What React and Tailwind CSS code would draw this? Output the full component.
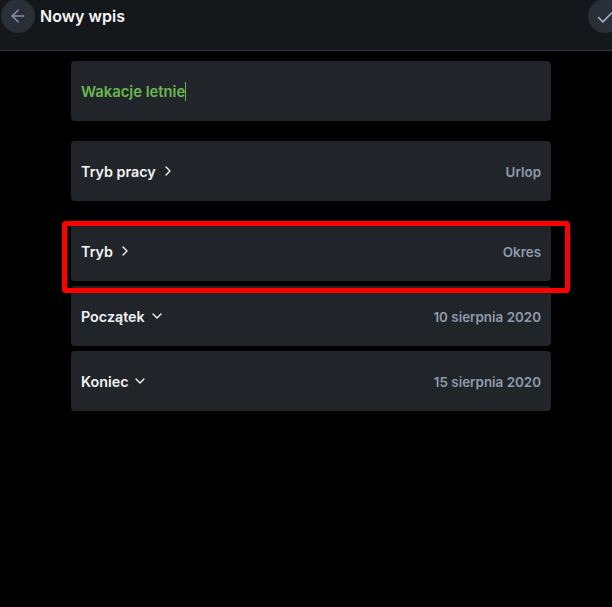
import { ArrowLeft, Check, ChevronRight, ChevronDown } from 'lucide-react';

function Row({ label, value, open, className = '' }) {
  const Icon = open ? ChevronDown : ChevronRight;
  return (
    <div className={`h-[60px] bg-[#212429] rounded-sm flex items-center justify-between px-2.5 ${className}`}>
      <div className="flex items-center gap-1">
        <span className="mt-0.5 text-[14.3px] font-semibold text-[#f2f3f4]">{label}</span>
        <Icon className="w-4 h-4 text-[#f2f3f4]" strokeWidth={2} />
      </div>
      <span className="mt-0.5 text-[13.4px] font-semibold text-[#8f9cae]">{value}</span>
    </div>
  );
}

export default function App() {
  return (
    <div className="relative w-[612px] h-[607px] bg-black overflow-hidden font-['Inter',sans-serif]">
      <header className="h-[51px] bg-[#15181b] border-b border-[#33363c] flex items-start justify-between pl-px">
        <div className="flex items-center gap-[5px] -mt-px">
          <div className="w-[34px] h-[34px] rounded-full bg-[#2a2e36] flex items-center justify-center">
            <ArrowLeft className="w-5 h-5 text-[#8596ab]" strokeWidth={1.8} />
          </div>
          <h1 className="text-[16px] font-semibold text-[#f5f6f7]">Nowy wpis</h1>
        </div>
        <div className="w-[34px] h-[34px] rounded-full bg-[#2a2e36] flex items-center justify-center -mr-[10px] -mt-px shrink-0">
          <Check className="w-[21px] h-[21px] mt-0.5 text-[#a5b4c6]" strokeWidth={1.8} />
        </div>
      </header>

      <main className="w-[480px] ml-[71px] pt-2.5">
        <div className="h-[60px] bg-[#212429] rounded-sm flex items-center px-2.5">
          <span className="mt-0.5 text-[14.8px] font-semibold text-[#69b84f]">Wakacje letnie</span>
          <span className="w-px h-[19px] bg-[#69b84f]" />
        </div>
        <Row label="Tryb pracy" value="Urlop" className="mt-5" />
        <Row label="Tryb" value="Okres" className="mt-5" />
        <Row label="Początek" value="10 sierpnia 2020" open className="mt-[5px]" />
        <Row label="Koniec" value="15 sierpnia 2020" open className="mt-[5px]" />
      </main>

      {/* red annotation box */}
      <div className="absolute left-[62px] top-[221px] w-[508px] h-[72px] border-[5px] border-[#ff0000] rounded-sm" />
    </div>
  );
}
